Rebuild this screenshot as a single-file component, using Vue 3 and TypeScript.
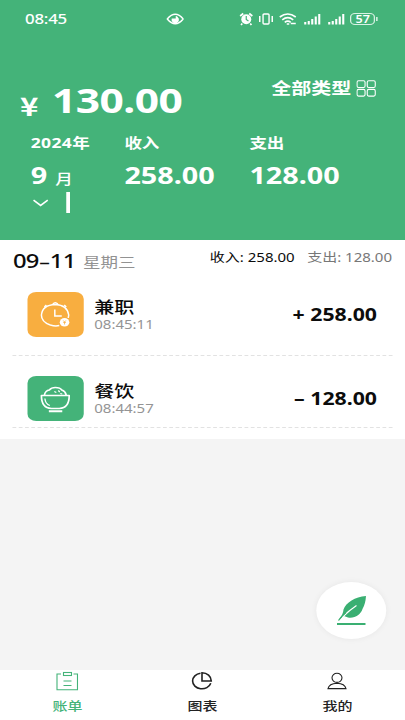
<script setup lang="ts">
interface Entry {
  kind: 'job' | 'food'
  name: string
  time: string
  amount: string
}

const entries: Entry[] = [
  { kind: 'job', name: '兼职', time: '08:45:11', amount: '+ 258.00' },
  { kind: 'food', name: '餐饮', time: '08:44:57', amount: '– 128.00' },
]

const tabs = [
  { id: 'bill', label: '账单' },
  { id: 'chart', label: '图表' },
  { id: 'me', label: '我的' },
]
</script>

<template>
  <div class="screen">
    <header class="hero">
      <div class="status">
        <span class="clock">08:45</span>
        <svg class="eye" viewBox="0 0 18 12" preserveAspectRatio="none">
          <path d="M1 6Q9-3.500 17 6Q9 15.500 1 6Z" fill="none" stroke="#fff" stroke-width="1.500" />
          <path d="M5.500 5.500A3.700 3.600 0 1 0 12.500 5.500Q11 2.500 9.500 3V5.500Z" fill="#fff" />
        </svg>
        <svg class="signals" viewBox="0 0 140 14" preserveAspectRatio="none" fill="none" stroke="#fff">
          <circle cx="7.500" cy="7.200" r="5" fill="#fff" stroke="none" />
          <path d="M1.400 4L4.500 1.500M13.600 4L10.500 1.500M3.500 11.500L2.300 13M11.500 11.500L12.700 13" stroke-width="1.700" />
          <path d="M7.500 4V7.500L9.700 9" stroke="#44b379" stroke-width="1.200" />
          <rect x="24.300" y="2" width="6" height="10" rx="1" stroke-width="1.400" />
          <path d="M21 4V10M33.500 4V10" stroke-width="1.500" />
          <path d="M41 5Q49-1 57 5M43.500 7.800Q49 3.500 54.500 7.800M46 10.300Q49 8 52 10.300" stroke-width="1.600" />
          <path d="M48 12H50.500M52 11.500H57" stroke-width="1.700" />
          <path d="M66.500 10V12.500M70 9V12.500M73.500 7V12.500M77 4.500V12.500M80.500 2V12.500" stroke-width="2.100" />
          <path d="M90.500 10V12.500M94 9V12.500M97.500 7V12.500M101 4.500V12.500M104.500 2V12.500" stroke-width="2.100" />
        </svg>
        <span class="battery">57</span>
      </div>

      <div class="total">
        <span class="yen">¥</span>
        <span class="sum">130.00</span>
        <span class="filter">全部类型</span>
        <svg class="grid" viewBox="0 0 20 17" preserveAspectRatio="none" fill="none" stroke="#fff" stroke-width="1.100">
          <rect x=".8" y=".8" width="8" height="6.700" rx="1.500" />
          <rect x="11" y=".8" width="8" height="6.700" rx="1.500" />
          <rect x=".8" y="9.400" width="8" height="6.700" rx="1.500" />
          <rect x="11" y="9.400" width="8" height="6.700" rx="1.500" />
        </svg>
      </div>

      <div class="stats">
        <div class="stat month">
          <span class="label">2024年</span>
          <span class="value">9<small>月</small></span>
          <span class="picker">
            <svg viewBox="0 0 16 8" preserveAspectRatio="none">
              <path d="M1 1.200L8 6.500L15 1.200" fill="none" stroke="#fff" stroke-width="1.600" />
            </svg>
            <i></i>
          </span>
        </div>
        <div class="stat income">
          <span class="label">收入</span>
          <span class="value">258.00</span>
        </div>
        <div class="stat">
          <span class="label">支出</span>
          <span class="value">128.00</span>
        </div>
      </div>
    </header>

    <section class="day">
      <div class="day-head">
        <span class="date">09<b>–</b>11</span>
        <span class="week">星期三</span>
        <span class="day-in">收入: 258.00</span>
        <span class="day-out">支出: 128.00</span>
      </div>
      <div v-for="e in entries" :key="e.time" class="entry" :class="e.kind">
        <div class="badge">
          <svg v-if="e.kind === 'job'" viewBox="0 0 56 45" preserveAspectRatio="none" fill="none" stroke="#fff" stroke-width="1.500">
            <path d="M32 33.500Q28 34.500 23 33Q14 30 14 23Q15 13 28 12.500Q40 13 41.500 23L41 26" />
            <path d="M25.500 12Q28 9.500 30.500 12M17 15L19 13M37 13L39 15" />
            <path d="M27.500 17.500V24H34.500" />
            <ellipse cx="37.300" cy="30.300" rx="4.800" ry="4.300" fill="#fff" stroke="none" />
            <path d="M36 28.500L37.300 30L38.600 28.500M36 30.500H38.600M37.300 30V32.500" stroke="#f8ae40" stroke-width=".8" />
          </svg>
          <svg v-else viewBox="0 0 56 45" preserveAspectRatio="none" fill="none" stroke="#fff" stroke-width="1.700">
            <path d="M14 19.500H42Q42 32 32 32.500H24Q14 32 14 19.500Z" stroke-linejoin="round" />
            <path d="M17 19Q18 14.500 22 14Q24 11.500 28 11.500Q33 11.500 34.500 14Q38 15 39 19" />
            <path d="M21.500 35.200H35" stroke-width="1.900" />
            <path d="M17.500 22.500Q18 28 22.500 29.500" stroke-width="1.300" />
            <path d="M27 15.500L29 16.500M31 14.500L32.500 16M33 17.500L35 18" stroke-width="1.200" />
          </svg>
        </div>
        <div class="info">
          <span class="name">{{ e.name }}</span>
          <span class="time">{{ e.time }}</span>
        </div>
        <span class="amount">{{ e.amount }}</span>
      </div>
    </section>

    <button class="fab">
      <svg viewBox="0 0 32 31" preserveAspectRatio="none">
        <path d="M4 24.500Q8 20 8.500 14.500C11 7.500 20 2 31 1Q30.500 9 27.500 14C25.500 20 20 23.500 13 22.500L9 21Z" fill="#3aaf72" />
        <path d="M7 22.500Q14 15.500 21.500 10.500" fill="none" stroke="#fff" stroke-width="1.200" />
        <path d="M3.500 25.500Q7 20.500 11 17.500" fill="none" stroke="#3aaf72" stroke-width="1.300" />
        <path d="M2 29H30.500" stroke="#3aaf72" stroke-width="2.200" />
      </svg>
    </button>

    <nav class="tabs">
      <div v-for="t in tabs" :key="t.id" class="tab" :class="t.id">
        <svg viewBox="0 0 24 20" preserveAspectRatio="none" fill="none" stroke="currentColor" stroke-width="1.100">
          <g v-if="t.id === 'bill'">
            <path d="M6 3H2V18.800H22.500V3H18.500" />
            <rect x="8.500" y="1.500" width="8" height="3" />
            <path d="M8.500 10H16.500M8.500 14.500H16.500" />
          </g>
          <g v-else-if="t.id === 'chart'" stroke-width="1.600">
            <path d="M10.500 2.300A9.300 7.800 0 1 0 20.800 12.300" />
            <path d="M12 1.800V10H21.300A9.300 8.200 0 0 0 12 1.800Z" />
          </g>
          <g v-else>
            <ellipse cx="12" cy="6.800" rx="5" ry="4.600" />
            <path d="M3 17.600Q4 12.500 12 12.200Q20 12.500 21 17.600Z" />
          </g>
        </svg>
        <span>{{ t.label }}</span>
      </div>
    </nav>
  </div>
</template>

<style>
body {
  margin: 0;
  overflow: hidden;
}
</style>

<style scoped>
.screen {
  width: 324px;
  height: 720px;
  transform: scaleX(1.25);
  transform-origin: 0 0;
  display: flex;
  flex-direction: column;
  background: #f4f4f4;
  font-family: "Noto Sans", "Noto Sans CJK SC", sans-serif;
  color: #0c0c0c;
  white-space: nowrap;
}
.screen span {
  display: block;
}
svg {
  display: block;
  flex: none;
}
.hero {
  height: 240px;
  background: #44b379;
  color: #fff;
}
.status {
  height: 38px;
  display: flex;
  align-items: center;
  padding-left: 20px;
}
.clock {
  width: 113px;
  font-size: 13.5px;
  font-weight: 500;
  letter-spacing: -0.2px;
}
.eye {
  width: 14.4px;
  height: 12px;
}
.signals {
  width: 112px;
  height: 14px;
  margin-left: 44px;
}
.battery {
  position: relative;
  box-sizing: border-box;
  width: 20.5px;
  height: 12px;
  margin-left: -23.5px;
  border: 1px solid #d9f2e4;
  border-radius: 4px;
  font-size: 10px;
  font-weight: 600;
  line-height: 10px;
  text-align: center;
}
.battery::after {
  content: "";
  position: absolute;
  right: -3px;
  top: 3px;
  width: 1.3px;
  height: 4px;
  background: #fff;
}
.total {
  height: 88px;
  display: flex;
  align-items: flex-start;
  padding-left: 16px;
}
.yen {
  width: 25.500px;
  margin-top: 49px;
  font-family: "Noto Sans CJK SC", sans-serif;
  font-size: 25px;
  font-weight: 700;
  line-height: 36px;
}
.sum {
  width: 175.500px;
  margin-top: 38px;
  font-size: 34px;
  font-weight: 700;
  line-height: 48px;
  letter-spacing: -0.4px;
}
.filter {
  width: 64px;
  margin-top: 38px;
  font-size: 16px;
  font-weight: 700;
  line-height: 24px;
}
.grid {
  width: 16px;
  height: 17px;
  margin: 42px 0 0 3.5px;
}
.stats {
  display: flex;
  padding: 6px 0 0 24.5px;
}
.stat {
  width: 100px;
}
.stat.month {
  width: 75px;
}
.label {
  font-size: 14px;
  font-weight: 700;
  line-height: 22px;
}
.month .label {
  letter-spacing: 0.3px;
}
.value {
  margin-top: 5px;
  font-size: 23px;
  font-weight: 700;
  line-height: 32px;
}
.value small {
  margin-left: 6.500px;
  font-size: 14px;
  font-weight: 500;
}
.picker {
  height: 20px;
}
.screen .picker {
  display: flex;
  align-items: center;
  margin-top: -3px;
}
.picker svg {
  width: 13px;
  height: 8px;
  margin: 2px 0 0 1.5px;
}
.picker i {
  width: 3.2px;
  height: 21px;
  margin-left: 14.300px;
  background: #fff;
}
.day {
  height: 198.500px;
  background: #fff;
}
.day-head {
  height: 44px;
  display: flex;
  align-items: flex-start;
  padding: 0 10.400px;
}
.date {
  width: 56px;
  margin-top: 7px;
  font-size: 19px;
  font-weight: 500;
  line-height: 28px;
  letter-spacing: -0.6px;
}
.date b {
  margin: 0 0.5px;
  font-size: 17px;
  font-weight: 500;
}
.week {
  margin-top: 10px;
  color: #929292;
  font-size: 14px;
  line-height: 24px;
}
.day-in {
  margin: 8px 0 0 auto;
  font-size: 12px;
  line-height: 20px;
}
.day-out {
  margin: 8px 0 0 10px;
  color: #777;
  font-size: 12px;
  line-height: 20px;
}
.entry {
  box-sizing: border-box;
  height: 72px;
  display: flex;
  align-items: flex-start;
  margin: 0 10.400px;
  padding: 8px 12px 0;
  border-bottom: 1px dashed #e2e2e2;
}
.entry.food {
  padding-top: 20px;
}
.badge {
  width: 44.500px;
  height: 45px;
  border-radius: 7px;
  background: #f8ae40;
}
.food .badge {
  background: #44b379;
}
.badge svg {
  width: 44.500px;
  height: 45px;
}
.info {
  margin: 4px 0 0 8.500px;
}
.name {
  font-size: 16px;
  font-weight: 500;
  line-height: 23px;
}
.time {
  color: #949494;
  font-size: 12px;
  line-height: 12px;
}
.amount {
  margin: 11px 0 0 auto;
  font-size: 17px;
  font-weight: 700;
  line-height: 24px;
}
.fab {
  position: absolute;
  left: 253px;
  top: 582px;
  width: 56px;
  height: 57px;
  padding: 0;
  border: 0;
  border-radius: 50%;
  background: #fff;
  box-shadow: 0 0 6px rgba(0, 0, 0, 0.06);
}
.fab svg {
  width: 25.600px;
  height: 31px;
  margin: 0 auto;
}
.tabs {
  height: 50px;
  margin-top: auto;
  display: flex;
  background: #fff;
}
.tab {
  flex: 1;
  display: flex;
  flex-direction: column;
  align-items: center;
  color: #222;
  font-size: 12px;
  font-weight: 500;
}
.tab.bill {
  color: #44b379;
}
.tab svg {
  width: 19.200px;
  height: 20px;
  margin-top: 1px;
}
.tab span {
  margin-top: 7px;
  line-height: 18px;
}
</style>
